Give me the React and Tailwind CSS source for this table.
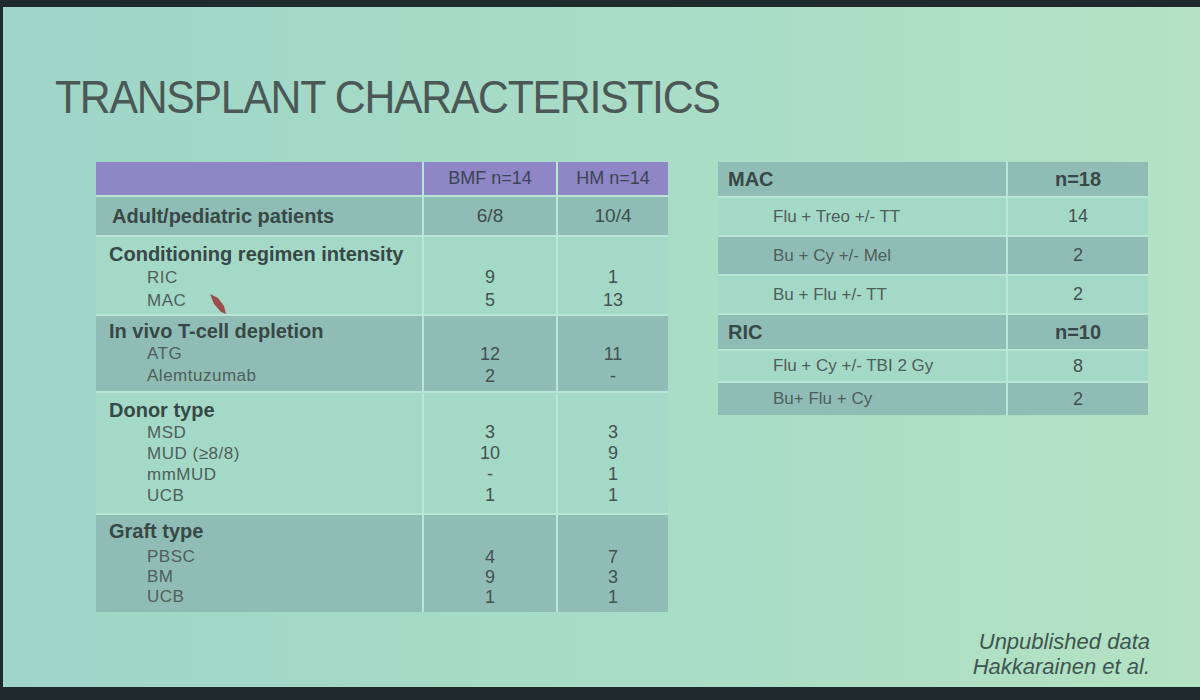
import React from "react";

const font = { fontFamily: '"Liberation Sans", Arial, sans-serif' };

const leftRows = [
  { title: "Adult/pediatric patients", bmf: "6/8", hm: "10/4", dark: true, h: "h-[38px]" },
  {
    title: "Conditioning regimen intensity",
    items: [["RIC", "9", "1"], ["MAC", "5", "13"]],
    dark: false,
    h: "h-[77px]",
    pt: "pt-[5px]",
    lead: "leading-[23px]",
    pointer: true,
  },
  {
    title: "In vivo T-cell depletion",
    items: [["ATG", "12", "11"], ["Alemtuzumab", "2", "-"]],
    dark: true,
    h: "h-[75px]",
    pt: "pt-[3px]",
    lead: "leading-[22px]",
  },
  {
    title: "Donor type",
    items: [["MSD", "3", "3"], ["MUD (≥8/8)", "10", "9"], ["mmMUD", "-", "1"], ["UCB", "1", "1"]],
    dark: false,
    h: "h-[120px]",
    pt: "pt-[5px]",
    lead: "leading-[21px]",
  },
  {
    title: "Graft type",
    items: [["PBSC", "4", "7"], ["BM", "9", "3"], ["UCB", "1", "1"]],
    dark: true,
    h: "h-[97px]",
    pt: "pt-[4px]",
    lead: "leading-[20px]",
    gap: "mb-[4px]",
  },
];

const rightRows = [
  { label: "MAC", n: "n=18", head: true, h: "h-[34px]" },
  { label: "Flu + Treo +/- TT", n: "14", h: "h-[37px]" },
  { label: "Bu + Cy +/- Mel", n: "2", h: "h-[37px]" },
  { label: "Bu + Flu +/- TT", n: "2", h: "h-[37px]" },
  { label: "RIC", n: "n=10", head: true, h: "h-[34px]" },
  { label: "Flu + Cy +/- TBI 2 Gy", n: "8", h: "h-[30px]" },
  { label: "Bu+ Flu + Cy", n: "2", h: "h-[32px]" },
];

// laser-pointer arrow sitting next to "MAC"
function Pointer() {
  return (
    <svg width="19" height="23" viewBox="0 0 19 23" className="absolute left-[100px] top-[4px]">
      <path d="M1 1 L9 5 L15 13 L17 21 L12 19 L5 11 Z" fill="#9f4d4b" />
    </svg>
  );
}

function LeftTable() {
  return (
    <div className="w-[572px] flex flex-col gap-[2px] bg-[#b9e6d6]">
      <div className="grid grid-cols-[326px_132px_110px] gap-[2px] h-[33px] text-[18px] text-[#3b4554]">
        <div className="bg-[#8f86c6]" />
        <div className="bg-[#8f86c6] flex items-center justify-center">BMF n=14</div>
        <div className="bg-[#8f86c6] flex items-center justify-center">HM n=14</div>
      </div>
      {leftRows.map((r) => {
        const bg = r.dark ? "bg-[#8fbdb5]" : "bg-[#a4d9c7]";
        if (!r.items) {
          return (
            <div key={r.title} className={`grid grid-cols-[326px_132px_110px] gap-[2px] ${r.h}`}>
              <div className={`${bg} flex items-center pl-[16px] text-[20px] font-bold text-[#384846]`}>{r.title}</div>
              <div className={`${bg} flex items-center justify-center text-[19px] text-[#3f4d4b]`}>{r.bmf}</div>
              <div className={`${bg} flex items-center justify-center text-[19px] text-[#3f4d4b]`}>{r.hm}</div>
            </div>
          );
        }
        const head = `h-[24px] ${r.gap || ""}`;
        return (
          <div key={r.title} className={`grid grid-cols-[326px_132px_110px] gap-[2px] ${r.h}`}>
            <div className={`${bg} pl-[13px] ${r.pt} flex flex-col`}>
              <div className={`${head} text-[20px] font-bold text-[#384846] leading-[24px] whitespace-nowrap`}>{r.title}</div>
              {r.items.map((it) => (
                <div key={it[0]} className={`relative pl-[38px] text-[17px] tracking-[0.03em] text-[#4f5e5b] ${r.lead}`}>
                  {it[0]}
                  {r.pointer && it[0] === "MAC" && <Pointer />}
                </div>
              ))}
            </div>
            {[1, 2].map((c) => (
              <div key={c} className={`${bg} ${r.pt} flex flex-col items-center text-[18px] text-[#44524f] ${r.lead}`}>
                <div className={head} />
                {r.items.map((it) => (
                  <div key={it[0]}>{it[c]}</div>
                ))}
              </div>
            ))}
          </div>
        );
      })}
    </div>
  );
}

function RightTable() {
  return (
    <div className="w-[430px] flex flex-col gap-[2px] bg-[#b9e6d6]">
      {rightRows.map((r, i) => {
        const bg = i % 2 === 0 ? "bg-[#8fbdb5]" : "bg-[#a4d9c7]";
        return (
          <div key={r.label} className={`grid grid-cols-[288px_140px] gap-[2px] ${r.h}`}>
            <div
              className={`${bg} flex items-center ${
                r.head ? "pl-[10px] text-[20px] font-bold text-[#384846]" : "pl-[55px] text-[17px] text-[#4f5e5b]"
              }`}
            >
              {r.label}
            </div>
            <div
              className={`${bg} flex items-center justify-center ${
                r.head ? "text-[20px] font-bold text-[#384846]" : "text-[18px] text-[#44524f]"
              }`}
            >
              {r.n}
            </div>
          </div>
        );
      })}
    </div>
  );
}

export default function App() {
  return (
    <div className="w-[1200px] h-[700px] bg-[#1f2b2a] flex flex-col overflow-hidden" style={font}>
      <div className="mt-[7px] ml-[3px] h-[680px] bg-gradient-to-r from-[#9ed5c7] via-[#a8dcc7] to-[#b4e2c3] flex flex-col">
        <div className="pt-[55px] pl-[52px] h-[155px]">
          <h1 className="text-[47px] font-normal text-[#4b5856] tracking-[-0.03em] origin-left scale-x-[0.91] whitespace-nowrap">
            TRANSPLANT CHARACTERISTICS
          </h1>
        </div>
        <div className="flex items-start pl-[93px] gap-[50px]">
          <LeftTable />
          <RightTable />
        </div>
        <div className="mt-auto mb-[8px] mr-[50px] self-end text-right italic text-[22px] leading-[25px] text-[#3f5551]">
          <div>Unpublished data</div>
          <div>Hakkarainen et al.</div>
        </div>
      </div>
    </div>
  );
}
